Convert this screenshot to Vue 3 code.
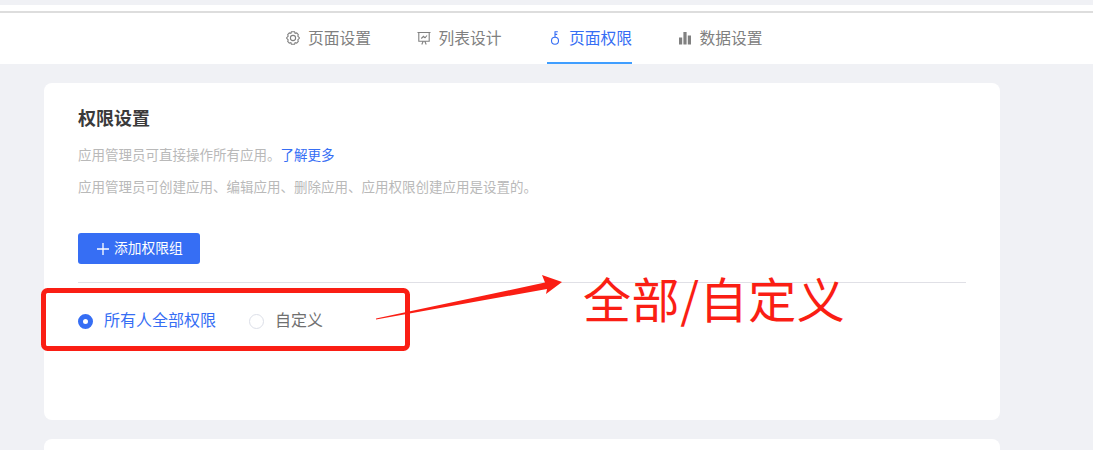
<template>
  <div class="page">
    <div class="top-strip"></div>
    <div class="top-gap"></div>

    <!-- 顶部导航 -->
    <nav class="tabs">
      <div
        v-for="tab in tabs"
        :key="tab.name"
        class="tab"
        :class="{ active: tab.name === current }"
      >
        <svg class="tab-icon" viewBox="0 0 14 14" fill="none" stroke="currentColor" stroke-width="1.100">
          <template v-if="tab.icon === 'gear'">
            <path d="M5.400.8h3.200l.5 1.500 1.600-.4 1.600 1.700-.5 1.500L13.500 7l-1.700 1.900.5 1.500-1.600 1.700-1.600-.4-.5 1.500H5.400l-.5-1.500-1.600.4-1.600-1.700.5-1.500L.5 7l1.700-1.900-.5-1.500 1.600-1.700 1.600.4z" />
            <circle cx="7" cy="7" r="2.600" />
          </template>
          <template v-else-if="tab.icon === 'chart'">
            <path d="M.5 1.500h13M1.800 1.500v8.700h10.400V1.500M4.800 13.500l1.400-3.300M9.200 13.500l-1.400-3.300M4.300 7.500l2.200-2.200L8 6.800l2-2.300" />
          </template>
          <template v-else-if="tab.icon === 'key'">
            <circle cx="8" cy="9.800" r="3.500" />
            <path d="M8 6.300V.8h2.800M8 3.400h2.200" />
          </template>
          <template v-else>
            <path d="M1 13.500V6.500h3.200v7zM5.400 13.500V1h3.200v12.500zM9.800 13.500V4.500H13v9z" fill="currentColor" stroke="none" />
          </template>
        </svg>
        <span>{{ tab.name }}</span>
      </div>
    </nav>

    <main class="content">
      <section class="card">
        <h2 class="title">权限设置</h2>
        <p class="desc">应用管理员可直接操作所有应用。<a class="link">了解更多</a></p>
        <p class="desc second">应用管理员可创建应用、编辑应用、删除应用、应用权限创建应用是设置的。</p>

        <button class="add-btn">
          <svg class="plus" viewBox="0 0 12 12" stroke="currentColor" stroke-width="1.300">
            <path d="M6 0v12M0 6h12" />
          </svg>
          <span class="btn-text">添加权限组</span>
        </button>

        <div class="divider"></div>

        <div class="radios">
          <label
            v-for="opt in options"
            :key="opt"
            class="radio"
            :class="{ checked: opt === selected }"
          >
            <span class="dot"></span>
            <span class="radio-text">{{ opt }}</span>
          </label>
        </div>
      </section>
      <section class="card next"></section>
    </main>

    <!-- 截图上的红色标注 -->
    <svg class="mark" viewBox="0 0 1093 450">
      <rect x="43.500" y="290.500" width="364" height="58" rx="4" fill="none" stroke="#fa1e14" stroke-width="5" />
      <polygon points="376,318.500 545,282.500 542,275 562,282 546,294 547,289 376,319.500" fill="#fa1e14" />
    </svg>
    <div class="mark-text">全部/自定义</div>
  </div>
</template>

<script setup>
const tabs = [
  { name: '页面设置', icon: 'gear' },
  { name: '列表设计', icon: 'chart' },
  { name: '页面权限', icon: 'key' },
  { name: '数据设置', icon: 'bars' }
]
const current = '页面权限'

const options = ['所有人全部权限', '自定义']
const selected = '所有人全部权限'
</script>

<style scoped>
.page {
  position: relative;
  width: 1093px;
  height: 450px;
  overflow: hidden;
  background: #f0f1f5;
  font-family: "Noto Sans CJK SC", "Noto Sans", sans-serif;
}

.top-strip {
  height: 5px;
}

.top-gap {
  height: 6px;
  background: #fff;
}

.tabs {
  display: flex;
  gap: 45.500px;
  height: 51px;
  padding-left: 286px;
  background: #fff;
  border-top: 2px solid #dddddd;
}

.tab {
  display: flex;
  align-items: center;
  gap: 8px;
  width: 85px;
  height: 49px;
  font-size: 15.750px;
  color: #808080;
  white-space: nowrap;
}

.tab.active {
  color: #366ef4;
  box-shadow: 0 2px 0 #409eff;
}

.tab-icon {
  width: 14px;
  height: 14px;
  flex-shrink: 0;
}

.content {
  display: flex;
  flex-direction: column;
  gap: 19px;
  padding: 19px 0 0 44px;
}

.card {
  width: 956px;
  height: 337px;
  box-sizing: border-box;
  padding: 21px 34px 0;
  background: #fff;
  border-radius: 8px;
}

.title {
  margin: 0;
  font-size: 18px;
  line-height: 26px;
  font-weight: 700;
  color: #3a3a3a;
}

.desc {
  margin: 14px 0 0;
  font-size: 13.500px;
  line-height: 20px;
  color: #b9b9b9;
}

.desc.second {
  margin-top: 12px;
}

.link {
  color: #366ef4;
}

.add-btn {
  display: flex;
  align-items: center;
  justify-content: center;
  gap: 5px;
  width: 122px;
  height: 31px;
  margin-top: 37px;
  padding: 0 0 0 2px;
  border: none;
  border-radius: 3px;
  background: #366ef4;
  color: #fff;
  font-family: inherit;
  font-size: 13.750px;
}

.btn-text {
  margin-top: -3px;
}

.plus {
  width: 12px;
  height: 12px;
}

.divider {
  height: 1px;
  margin-top: 18px;
  background: #e0e0e6;
}

.radios {
  display: flex;
  gap: 33px;
  margin-top: 26px;
}

.radio {
  display: flex;
  align-items: center;
  gap: 11px;
  height: 24px;
  font-size: 16px;
  color: #707070;
}

.radio-text {
  margin-top: -4px;
}

.radio.checked {
  color: #366ef4;
}

.dot {
  width: 15px;
  height: 15px;
  box-sizing: border-box;
  border: 1px solid #dcdfe8;
  border-radius: 50%;
  background: #fff;
}

.radio.checked .dot {
  border: 5px solid #366ef4;
}

.mark {
  position: absolute;
  top: 0;
  left: 0;
  width: 1093px;
  height: 450px;
  pointer-events: none;
}

.mark-text {
  position: absolute;
  top: 262px;
  left: 583px;
  font-size: 48px;
  line-height: 70px;
  letter-spacing: 0.600px;
  color: #fa1e14;
  white-space: nowrap;
}
</style>
